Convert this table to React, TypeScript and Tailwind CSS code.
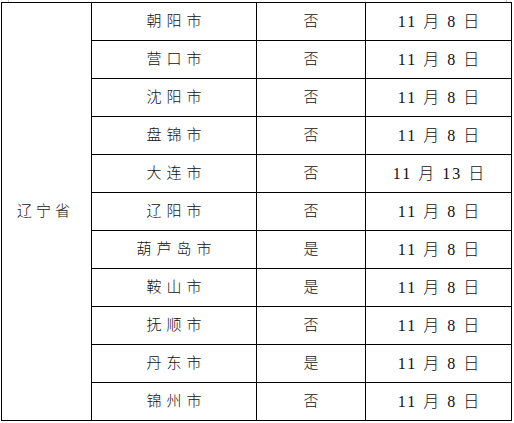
import React from 'react';

interface CityRow {
  city: string;
  flag: string;
  date: [string, string];
}

const rows: CityRow[] = [
  { city: '朝阳市', flag: '否', date: ['11', '8'] },
  { city: '营口市', flag: '否', date: ['11', '8'] },
  { city: '沈阳市', flag: '否', date: ['11', '8'] },
  { city: '盘锦市', flag: '否', date: ['11', '8'] },
  { city: '大连市', flag: '否', date: ['11', '13'] },
  { city: '辽阳市', flag: '否', date: ['11', '8'] },
  { city: '葫芦岛市', flag: '是', date: ['11', '8'] },
  { city: '鞍山市', flag: '是', date: ['11', '8'] },
  { city: '抚顺市', flag: '否', date: ['11', '8'] },
  { city: '丹东市', flag: '是', date: ['11', '8'] },
  { city: '锦州市', flag: '否', date: ['11', '8'] },
];

const cell = 'flex items-center justify-center border-r border-b border-black';

export default function App() {
  return (
    <div
      className="w-[514px] h-[423px] bg-white text-[#111] text-[15px] leading-none font-light"
      style={{ fontFamily: '"Liberation Serif", "Noto Sans CJK SC", serif' }}
    >
      {/* page corner marks */}
      <div className="h-[2px] flex justify-between pl-[8px] pr-[7px]">
        <div className="w-px h-full bg-[#c8c8c8]" />
        <div className="w-px h-full bg-[#c8c8c8]" />
      </div>

      <div className="ml-[1px] w-[511px] grid grid-cols-[90px_165px_109px_146px] grid-rows-[repeat(11,38px)] border-l border-t border-black">
        <div className={`${cell} row-span-11 col-start-1 row-start-1 tracking-[4px] pl-[4px] pr-[6px]`}>辽宁省</div>
        {rows.map((r, i) => (
          <React.Fragment key={r.city}>
            <div className={`${cell} col-start-2 tracking-[5px] pl-[5px]`} style={{ gridRowStart: i + 1 }}>{r.city}</div>
            <div className={`${cell} col-start-3`} style={{ gridRowStart: i + 1 }}>{r.flag}</div>
            <div className={`${cell} col-start-4 tracking-[2px] pl-[2px] text-[16px]`} style={{ gridRowStart: i + 1 }}>
              {r.date[0]} 月 {r.date[1]} 日
            </div>
          </React.Fragment>
        ))}
      </div>
    </div>
  );
}
